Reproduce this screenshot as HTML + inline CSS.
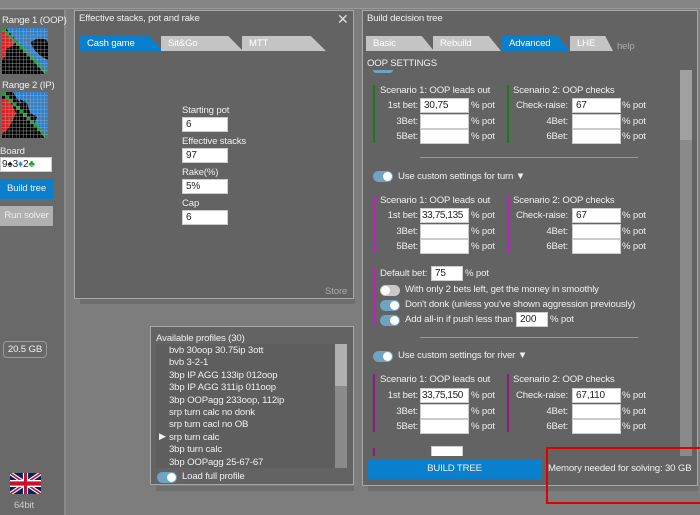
<!DOCTYPE html>
<html><head><meta charset="utf-8"><style>
*{margin:0;padding:0;box-sizing:border-box}
body{width:700px;height:515px;overflow:hidden;background:#7d7d7d;font-family:"Liberation Sans",sans-serif;font-size:9.6px;letter-spacing:-0.15px;color:#f0f0f0;position:relative}
.a,.lb,.lb2{position:absolute;white-space:nowrap}
.panel{position:absolute;background:#636363;border:1px solid #a8a8a8}
.inp{position:absolute;background:#fff;border:1px solid #ccc;color:#222;height:15px;padding-left:3px;line-height:13px;font-size:10px;white-space:nowrap;overflow:hidden}
.tab{position:absolute;height:15px;line-height:15px;padding-left:7px;color:#fff;background:#c4c4c4;clip-path:polygon(0 0,82% 0,100% 100%,0 100%)}
.tab.on{background:#0a7fcc}
.bar{position:absolute;width:2px}
.tg{position:absolute;width:20px;height:11px;border-radius:6px;background:#6fa3c2}
.tg::after{content:"";position:absolute;right:1px;top:1px;width:9px;height:9px;border-radius:50%;background:#fff}
.tg.off{background:#c8c8c8}.tg.off::after{left:1px;right:auto}
.lb{text-align:right;width:46px}
.lb2{text-align:right;width:58px}
</style></head><body>
<div class="a" style="left:0;top:0;width:700px;height:9px;background:#858585;border-bottom:1px solid #9a9a9a"></div>
<div class="a" style="left:0;top:10px;width:66px;height:505px;background:#696969;border-right:2px solid #8a8a8a"></div>
<div class="a" style="left:2px;top:15px">Range 1 (OOP)</div>
<svg class="a" style="left:2px;top:28px" width="46" height="46" viewBox="0 0 13 13">
<rect width="13" height="13" fill="#000"/>
<polygon points="1,0 13,0 13,13 12,13" fill="#2a7fd0"/>
<polygon points="8,4 10,3 12,3 13,4 13,9 11,8 9,6" fill="#000"/>
<polygon points="0,1 1,1 3,3 4,4 3,5 1,6 1,8 0,9" fill="#e02020"/>
<path d="M0 0h1v1h-1zM1 1h1v1h-1zM2 2h1v1h-1zM3 3h1v1h-1zM4 4h1v1h-1zM5 5h1v1h-1zM6 6h1v1h-1zM7 7h1v1h-1zM8 8h1v1h-1zM9 9h1v1h-1zM10 10h1v1h-1zM11 11h1v1h-1zM12 12h1v1h-1z" fill="#20a030"/>
<path d="M1 0V13M2 0V13M3 0V13M4 0V13M5 0V13M6 0V13M7 0V13M8 0V13M9 0V13M10 0V13M11 0V13M12 0V13M0 1H13M0 2H13M0 3H13M0 4H13M0 5H13M0 6H13M0 7H13M0 8H13M0 9H13M0 10H13M0 11H13M0 12H13" stroke="#aaa" stroke-width="0.12"/></svg>
<div class="a" style="left:2px;top:80px">Range 2 (IP)</div>
<svg class="a" style="left:2px;top:92px" width="46" height="46" viewBox="0 0 13 13">
<rect width="13" height="13" fill="#000"/>
<polygon points="3,0 13,0 13,13 12,13" fill="#2a7fd0"/>
<polygon points="5,2 7,3 8,6 10,7 9,9 7,7 6,5" fill="#000"/>
<polygon points="0,2 2,2 3,4 4,6 3,8 2,10 1,11 0,12" fill="#e02020"/>
<path d="M0 0h1v1h-1zM1 1h1v1h-1zM2 2h1v1h-1zM3 3h1v1h-1zM4 4h1v1h-1zM5 5h1v1h-1zM6 6h1v1h-1zM7 7h1v1h-1zM8 8h1v1h-1zM9 9h1v1h-1zM10 10h1v1h-1zM11 11h1v1h-1zM12 12h1v1h-1z" fill="#20a030"/>
<path d="M1 0V13M2 0V13M3 0V13M4 0V13M5 0V13M6 0V13M7 0V13M8 0V13M9 0V13M10 0V13M11 0V13M12 0V13M0 1H13M0 2H13M0 3H13M0 4H13M0 5H13M0 6H13M0 7H13M0 8H13M0 9H13M0 10H13M0 11H13M0 12H13" stroke="#aaa" stroke-width="0.12"/></svg>
<div class="a" style="left:0;top:146px">Board</div>
<div class="inp" style="left:0;top:157px;width:52px;padding-left:1px">9<span>♠</span>3<span style="color:#2a8fe0">♦</span>2<span style="color:#20a030">♣</span></div>
<div class="a" style="left:0;top:179px;width:53px;height:20px;background:#0a7fcc;text-align:center;line-height:20px">Build tree</div>
<div class="a" style="left:0;top:206px;width:53px;height:20px;background:#b0b0b0;text-align:center;line-height:20px;color:#eee">Run solver</div>
<div class="a" style="left:3px;top:341px;width:44px;height:17px;border:1px solid #999;border-radius:4px;text-align:center;line-height:15px">20.5 GB</div>
<svg class="a" style="left:10px;top:473px" width="31" height="21" viewBox="0 0 60 30" preserveAspectRatio="none"><rect width="60" height="30" fill="#012169"/><path d="M0 0L60 30M60 0L0 30" stroke="#fff" stroke-width="6"/><path d="M0 0L60 30M60 0L0 30" stroke="#c8102e" stroke-width="2.5"/><path d="M30 0V30M0 15H60" stroke="#fff" stroke-width="10"/><path d="M30 0V30M0 15H60" stroke="#c8102e" stroke-width="6"/></svg>
<div class="a" style="left:14px;top:500px;color:#ccc">64bit</div>

<div class="panel" style="left:74px;top:10px;width:280px;height:289px"></div>
<div class="a" style="left:79px;top:13px">Effective stacks, pot and rake</div>
<div class="a" style="left:337px;top:11px;font-size:14px;color:#ddd">✕</div>
<div class="tab on" style="left:80px;top:36px;width:84px">Cash game</div>
<div class="tab" style="left:161px;top:36px;width:82px">Sit&amp;Go</div>
<div class="tab" style="left:242px;top:36px;width:84px">MTT</div>
<div class="a" style="left:182px;top:105px">Starting pot</div>
<div class="inp" style="left:182px;top:117px;width:46px">6</div>
<div class="a" style="left:182px;top:136px">Effective stacks</div>
<div class="inp" style="left:182px;top:148px;width:46px">97</div>
<div class="a" style="left:182px;top:167px">Rake(%)</div>
<div class="inp" style="left:182px;top:179px;width:46px">5%</div>
<div class="a" style="left:182px;top:198px">Cap</div>
<div class="inp" style="left:182px;top:210px;width:46px">6</div>
<div class="a" style="left:325px;top:286px;color:#aaa">Store</div>
<div class="a" style="left:80px;top:299px;width:275px;height:5px;background:#6e6e6e"></div>

<div class="panel" style="left:150px;top:326px;width:204px;height:159px"></div>
<div class="a" style="left:156px;top:486px;width:198px;height:5px;background:#6e6e6e"></div>
<div class="a" style="left:156px;top:333px">Available profiles (30)</div>
<div class="a" style="left:156px;top:344px;width:190px;height:124px;background:#5e5e5e"></div>
<div class="a" style="left:335px;top:344px;width:12px;height:124px;background:#8a8a8a"></div>
<div class="a" style="left:335px;top:344px;width:12px;height:42px;background:#b0b0b0"></div>
<div class="a" style="left:169px;top:345px;line-height:12.4px">bvb 30oop 30.75ip 3ott<br>bvb 3-2-1<br>3bp IP AGG 133ip 012oop<br>3bp IP AGG 311ip 011oop<br>3bp OOPagg 233oop, 112ip<br>srp turn calc no donk<br>srp turn cacl no OB<br>srp turn calc<br>3bp turn calc<br>3bp OOPagg 25-67-67</div>
<div class="a" style="left:159px;top:431px;font-size:9px">▶</div>
<div class="tg" style="left:157px;top:472px"></div>
<div class="a" style="left:182px;top:471px">Load full profile</div>

<div class="panel" style="left:362px;top:10px;width:336px;height:476px"></div>
<div class="a" style="left:368px;top:486px;width:330px;height:5px;background:#6e6e6e"></div>
<div class="a" style="left:367px;top:13px">Build decision tree</div>
<div class="tab" style="left:366px;top:36px;width:68px">Basic</div>
<div class="tab" style="left:433px;top:36px;width:68px">Rebuild</div>
<div class="tab on" style="left:502px;top:36px;width:68px">Advanced</div>
<div class="tab" style="left:570px;top:36px;width:43px">LHE</div>
<div class="a" style="left:617px;top:41px;color:#aaa">help</div>
<div class="a" style="left:367px;top:58px">OOP SETTINGS</div>
<div class="a" style="left:680px;top:70px;width:12px;height:386px;background:#8a8a8a"></div>
<div class="a" style="left:680px;top:70px;width:12px;height:70px;background:#a0a0a0"></div>
<div class="a" style="left:373px;top:70px;width:20px;height:3px;background:#6fa3c2;border-radius:0 0 4px 4px"></div>

<div class="bar" style="left:373px;top:85px;height:58px;background:#1a7a1a"></div>
<div class="bar" style="left:507px;top:85px;height:58px;background:#1a7a1a"></div>
<div class="a" style="left:380px;top:85px">Scenario 1: OOP leads out</div>
<div class="a" style="left:513px;top:85px">Scenario 2: OOP checks</div>
<div class="lb" style="left:372px;top:100px">1st bet:</div><div class="inp" style="left:420px;top:98px;width:49px">30,75</div><div class="a" style="left:471px;top:100px">% pot</div>
<div class="lb" style="left:372px;top:116px">3Bet:</div><div class="inp" style="left:420px;top:114px;width:49px"></div><div class="a" style="left:471px;top:116px">% pot</div>
<div class="lb" style="left:372px;top:131px">5Bet:</div><div class="inp" style="left:420px;top:129px;width:49px"></div><div class="a" style="left:471px;top:131px">% pot</div>
<div class="lb2" style="left:510px;top:100px">Check-raise:</div><div class="inp" style="left:572px;top:98px;width:49px">67</div><div class="a" style="left:622px;top:100px">% pot</div>
<div class="lb2" style="left:510px;top:116px">4Bet:</div><div class="inp" style="left:572px;top:114px;width:49px"></div><div class="a" style="left:622px;top:116px">% pot</div>
<div class="lb2" style="left:510px;top:131px">6Bet:</div><div class="inp" style="left:572px;top:129px;width:49px"></div><div class="a" style="left:622px;top:131px">% pot</div>
<div class="a" style="left:420px;top:157px;width:218px;height:1px;background:#999"></div>
<div class="tg" style="left:373px;top:171px"></div><div class="a" style="left:398px;top:171px">Use custom settings for turn ▼</div>

<div class="bar" style="left:373px;top:195px;height:58px;background:#c020c0"></div>
<div class="bar" style="left:507px;top:195px;height:58px;background:#c020c0"></div>
<div class="a" style="left:380px;top:195px">Scenario 1: OOP leads out</div>
<div class="a" style="left:513px;top:195px">Scenario 2: OOP checks</div>
<div class="lb" style="left:372px;top:210px">1st bet:</div><div class="inp" style="left:420px;top:208px;width:49px;padding-left:1px;letter-spacing:-0.4px">33,75,135</div><div class="a" style="left:471px;top:210px">% pot</div>
<div class="lb" style="left:372px;top:226px">3Bet:</div><div class="inp" style="left:420px;top:224px;width:49px"></div><div class="a" style="left:471px;top:226px">% pot</div>
<div class="lb" style="left:372px;top:241px">5Bet:</div><div class="inp" style="left:420px;top:239px;width:49px"></div><div class="a" style="left:471px;top:241px">% pot</div>
<div class="lb2" style="left:510px;top:210px">Check-raise:</div><div class="inp" style="left:572px;top:208px;width:49px">67</div><div class="a" style="left:622px;top:210px">% pot</div>
<div class="lb2" style="left:510px;top:226px">4Bet:</div><div class="inp" style="left:572px;top:224px;width:49px"></div><div class="a" style="left:622px;top:226px">% pot</div>
<div class="lb2" style="left:510px;top:241px">6Bet:</div><div class="inp" style="left:572px;top:239px;width:49px"></div><div class="a" style="left:622px;top:241px">% pot</div>

<div class="bar" style="left:373px;top:268px;height:57px;background:#c020c0"></div>
<div class="a" style="left:380px;top:268px">Default bet:</div><div class="inp" style="left:431px;top:266px;width:32px">75</div><div class="a" style="left:465px;top:268px">% pot</div>
<div class="tg off" style="left:380px;top:285px"></div><div class="a" style="left:405px;top:284px">With only 2 bets left, get the money in smoothly</div>
<div class="tg" style="left:380px;top:300px"></div><div class="a" style="left:405px;top:299px">Don't donk (unless you've shown aggression previously)</div>
<div class="tg" style="left:380px;top:315px"></div><div class="a" style="left:405px;top:314px">Add all-in if push less than</div><div class="inp" style="left:516px;top:312px;width:32px">200</div><div class="a" style="left:550px;top:314px">% pot</div>
<div class="a" style="left:420px;top:337px;width:218px;height:1px;background:#999"></div>
<div class="tg" style="left:373px;top:351px"></div><div class="a" style="left:398px;top:350px">Use custom settings for river ▼</div>

<div class="bar" style="left:373px;top:374px;height:58px;background:#8a1a8a"></div>
<div class="bar" style="left:507px;top:374px;height:58px;background:#8a1a8a"></div>
<div class="a" style="left:380px;top:374px">Scenario 1: OOP leads out</div>
<div class="a" style="left:513px;top:374px">Scenario 2: OOP checks</div>
<div class="lb" style="left:372px;top:390px">1st bet:</div><div class="inp" style="left:420px;top:388px;width:49px;padding-left:1px;letter-spacing:-0.4px">33,75,150</div><div class="a" style="left:471px;top:390px">% pot</div>
<div class="lb" style="left:372px;top:406px">3Bet:</div><div class="inp" style="left:420px;top:404px;width:49px"></div><div class="a" style="left:471px;top:406px">% pot</div>
<div class="lb" style="left:372px;top:421px">5Bet:</div><div class="inp" style="left:420px;top:419px;width:49px"></div><div class="a" style="left:471px;top:421px">% pot</div>
<div class="lb2" style="left:510px;top:390px">Check-raise:</div><div class="inp" style="left:572px;top:388px;width:49px">67,110</div><div class="a" style="left:622px;top:390px">% pot</div>
<div class="lb2" style="left:510px;top:406px">4Bet:</div><div class="inp" style="left:572px;top:404px;width:49px"></div><div class="a" style="left:622px;top:406px">% pot</div>
<div class="lb2" style="left:510px;top:421px">6Bet:</div><div class="inp" style="left:572px;top:419px;width:49px"></div><div class="a" style="left:622px;top:421px">% pot</div>
<div class="bar" style="left:373px;top:448px;height:8px;background:#8a1a8a"></div>
<div class="inp" style="left:431px;top:446px;width:32px;height:10px;border-bottom:0"></div>

<div class="a" style="left:367px;top:459px;width:175px;height:20px;background:#0a7fcc;text-align:center;line-height:20px">BUILD TREE</div>
<div class="a" style="left:548px;top:463px">Memory needed for solving: 30 GB</div>
<div class="a" style="left:546px;top:447px;width:160px;height:57px;border:2px solid #e00000"></div>
</body></html>
